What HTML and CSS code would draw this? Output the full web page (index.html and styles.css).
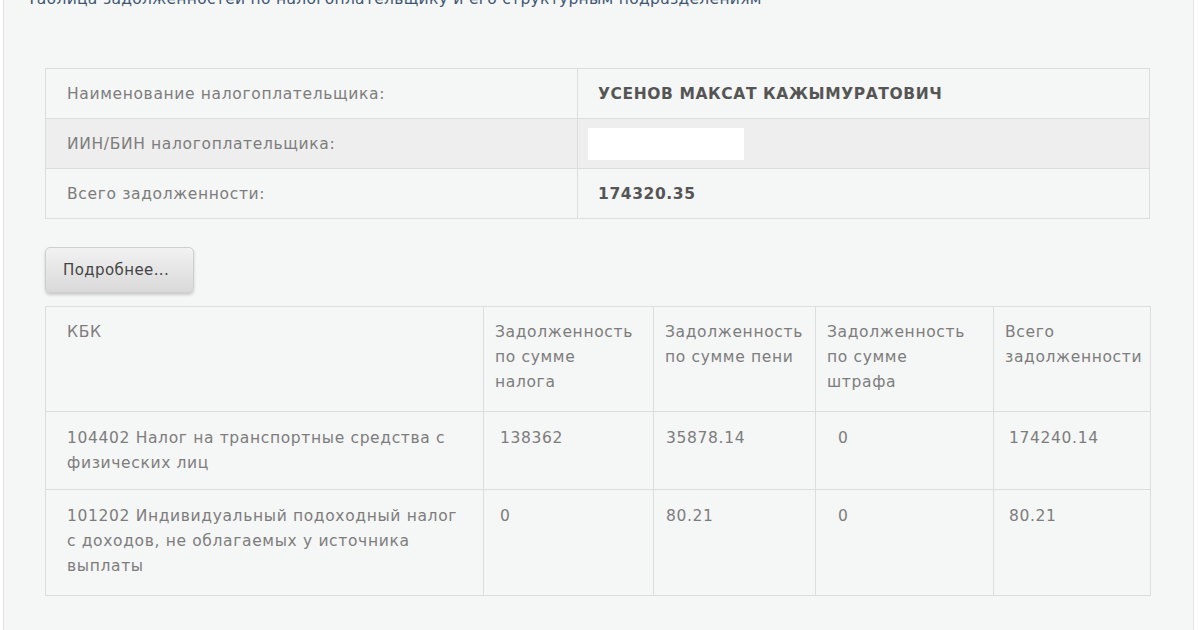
FILE: index.html
```html
<!DOCTYPE html>
<html lang="ru">
<head>
<meta charset="utf-8">
<title>Таблица задолженностей</title>
<link rel="stylesheet" href="styles.css">
</head>
<body>
<div class="panel">
  <div class="title">Таблица задолженностей по налогоплательщику и его структурным подразделениям</div>
  <table class="info">
    <colgroup><col class="w-lbl"><col></colgroup>
    <tr><td class="lbl">Наименование налогоплательщика:</td><td class="val">УСЕНОВ МАКСАТ КАЖЫМУРАТОВИЧ</td></tr>
    <tr class="alt"><td class="lbl">ИИН/БИН налогоплательщика:</td><td class="val"><span class="mask"></span></td></tr>
    <tr><td class="lbl">Всего задолженности:</td><td class="val">174320.35</td></tr>
  </table>
  <button class="btn" type="button">Подробнее...</button>
  <table class="debts">
    <colgroup>
      <col class="w1"><col class="w2"><col class="w3"><col class="w4"><col class="w5">
    </colgroup>
    <tr class="head">
      <td class="c1">КБК</td>
      <td>Задолженность по сумме налога</td>
      <td>Задолженность по сумме пени</td>
      <td>Задолженность по сумме штрафа</td>
      <td>Всего задолженности</td>
    </tr>
    <tr>
      <td class="c1">104402 Налог на транспортные средства с физических лиц</td>
      <td class="n2">138362</td>
      <td class="n3">35878.14</td>
      <td class="n4">0</td>
      <td class="n5">174240.14</td>
    </tr>
    <tr class="tall">
      <td class="c1">101202 Индивидуальный подоходный налог с доходов, не облагаемых у источника выплаты</td>
      <td class="n2">0</td>
      <td class="n3">80.21</td>
      <td class="n4">0</td>
      <td class="n5">80.21</td>
    </tr>
  </table>
</div>
</body>
</html>
```

FILE: styles.css
```css
html, body {
  margin: 0;
  padding: 0;
  background: #ffffff;
  height: 630px;
  overflow: hidden;
}
body {
  font-family: "DejaVu Sans", "Liberation Sans", sans-serif;
  font-size: 15.5px;
  letter-spacing: 0.65px;
  color: #7d7d7d;
}
.panel {
  margin-left: 3px;
  width: 1191px;
  height: 640px;
  background: #f5f6f6;
  border-left: 1px solid #e2e4e4;
  border-right: 1px solid #e2e4e4;
  padding: 0 0 0 41px;
  box-sizing: border-box;
  overflow: hidden;
}
.title {
  margin: -11px 0 0 -18px;
  height: 20px;
  line-height: 20px;
  color: #3e5672;
  letter-spacing: 0.3px;
  white-space: nowrap;
}
table {
  border-collapse: collapse;
  width: 1105px;
  table-layout: fixed;
}
td {
  border: 1px solid #dddddd;
  vertical-align: top;
}
.info {
  margin-top: 59px;
}
.w-lbl { width: 532px; }
.info td {
  height: 50px;
  box-sizing: border-box;
  padding: 0 20px;
  vertical-align: middle;
  line-height: 20px;
}
.info .lbl {
  padding-left: 21px;
}
.info .val {
  font-weight: bold;
  color: #555555;
  letter-spacing: 0.6px;
}
.info tr.alt td {
  background: #eeeeee;
}
.mask {
  display: block;
  width: 156px;
  height: 32px;
  margin-left: -10px;
  background: #ffffff;
}
.btn {
  display: block;
  margin-top: 28px;
  width: 149px;
  height: 46px;
  border: 1px solid #cfcfcf;
  border-radius: 5px;
  background: linear-gradient(#f2f2f2, #d9d9d9);
  box-shadow: 0 2px 3px rgba(0,0,0,0.18);
  font-family: "DejaVu Sans", "Liberation Sans", sans-serif;
  font-size: 15px;
  letter-spacing: 0.4px;
  color: #444444;
  text-align: left;
  padding: 0 0 0 17px;
}
.debts {
  margin-top: 13px;
}
.w1 { width: 438px; }
.w2 { width: 170px; }
.w3 { width: 162px; }
.w4 { width: 178px; }
.w5 { width: 157px; }
.debts td {
  line-height: 25px;
  padding: 14px 14px 13px 11px;
}
.debts .head td { padding-top: 13px; padding-bottom: 16px; }
.debts .tall td { padding-bottom: 16px; }
.debts .c1 { padding-left: 21px; padding-right: 12px; }
.debts .n2 { padding-left: 16px; }
.debts .n3 { padding-left: 12px; }
.debts .n4 { padding-left: 22px; }
.debts .n5 { padding-left: 15px; }
```
